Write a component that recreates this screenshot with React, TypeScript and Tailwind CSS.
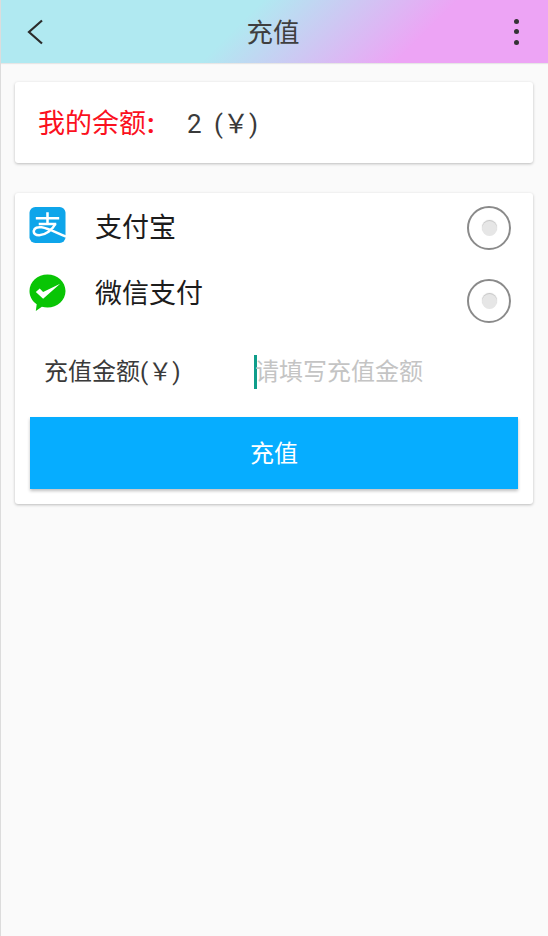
const cjk = "font-['Roboto','Noto_Sans_CJK_SC',sans-serif]";

function AlipayIcon() {
  return (
    <svg width="37" height="38" viewBox="0 0 38 38" className="-ml-[1px] shrink-0">
      <rect x="0.5" y="0.5" width="37" height="37" rx="6" fill="#0ea5ea" />
      <path d="M7 12H31M19 6V18M10 18H28" stroke="#fff" strokeWidth="2.6" fill="none" />
      <path
        d="M27 18C24 24 17 29.5 10.5 29.5C6.5 29.5 4.5 27.5 5 25C5.5 22 9 20.8 13 21.4C20 22.5 28 27 38 31"
        stroke="#fff"
        strokeWidth="2.6"
        fill="none"
      />
    </svg>
  );
}

function WechatIcon() {
  return (
    <svg width="37" height="38" viewBox="0 0 38 38" className="-ml-[1px] shrink-0">
      <path d="M19 0C29.2 0 37.5 7.6 37.5 17S29.2 34 19 34C17 34 15 33.7 13.2 33.2L7 37.5L7.9 30.6C3.4 27.5 0.5 22.6 0.5 17C0.5 7.6 8.8 0 19 0Z" fill="#09c505" />
      <path d="M7 18L14.5 25L32 9.5L14.5 18L11 14.5Z" fill="#fff" />
    </svg>
  );
}

function Radio({ className }: { className?: string }) {
  return (
    <div className={`flex h-[44px] w-[44px] shrink-0 items-center justify-center rounded-full border-2 border-[#8a8a8a] bg-white ${className ?? ""}`}>
      <div className="h-[15px] w-[15px] rounded-full bg-[#e6e6e6] shadow-[0_-1px_1px_rgba(0,0,0,0.25)]" />
    </div>
  );
}

export default function App() {
  return (
    <div className={`flex h-[936px] w-[548px] flex-col overflow-hidden border-l border-[#dcdcdc] bg-[#fafafa] ${cjk}`}>
      {/* Top bar */}
      <div className="flex h-[63px] shrink-0 items-center justify-between bg-[linear-gradient(135deg,#b0e9f1_0%,#b0e9f1_43%,#eda4f5_75%,#eda4f5_100%)] pl-[26px] pr-[29px] shadow-[0_1px_1px_rgba(0,0,0,0.08)]">
        <div className="w-[30px]">
          <svg width="16" height="26" viewBox="0 0 16 26">
            <path d="M15 1.5L2 13L15 24.5" stroke="#2b2b2b" strokeWidth="2.2" fill="none" />
          </svg>
        </div>
        <span className="pt-[4px] text-[26.5px] leading-none text-[#3f3f3f]">充值</span>
        <div className="flex w-[30px] flex-col items-end gap-[5.5px]">
          <div className="h-[5px] w-[5px] rounded-full bg-[#333]" />
          <div className="h-[5px] w-[5px] rounded-full bg-[#333]" />
          <div className="h-[5px] w-[5px] rounded-full bg-[#333]" />
        </div>
      </div>

      <div className="flex flex-col gap-[30px] pl-[14px] pr-[15px] pt-[19px]">
        {/* Balance */}
        <div className="flex h-[81px] items-center rounded-[3px] bg-white pl-[23px] pt-[3px] shadow-[0_1px_3px_rgba(0,0,0,0.25)]">
          <span className="w-[149px] text-[27px] leading-none text-[#fb1020]">我的余额<span className="ml-[1px] font-bold">:</span></span>
          <span className="text-[26px] leading-none text-[#3a3a3a] [word-spacing:6px]">2 (￥)</span>
        </div>

        {/* Payment */}
        <div className="flex h-[311px] flex-col rounded-[3px] bg-white px-[15px] pt-[13px] shadow-[0_1px_3px_rgba(0,0,0,0.25)]">
          <div className="flex h-[44px] items-start">
            <AlipayIcon />
            <span className="ml-[29px] grow text-[27px] leading-[44px] text-[#1c1c1c]">支付宝</span>
            <Radio className="mr-[7px]" />
          </div>
          <div className="mt-[24px] flex h-[44px] items-start">
            <WechatIcon />
            <span className="ml-[29px] grow text-[27px] leading-[40px] text-[#1c1c1c]">微信支付</span>
            <Radio className="mr-[7px] mt-[5px]" />
          </div>
          <div className="mt-[35px] flex h-[38px] items-center pl-[14px]">
            <span className="w-[210px] text-[24px] leading-none text-[#3a3a3a]">充值金额(￥)</span>
            <div className="h-[34px] w-[3px] bg-[#0f9d8a]" />
            <span className="-ml-[2px] text-[24px] leading-none text-[#c4c4c4]">请填写充值金额</span>
          </div>
          <button className="mt-[26px] h-[72px] w-full bg-[#06adff] pt-[1px] text-[24px] leading-none text-white shadow-[0_2px_3px_rgba(0,0,0,0.25)]">
            充值
          </button>
        </div>
      </div>
    </div>
  );
}
